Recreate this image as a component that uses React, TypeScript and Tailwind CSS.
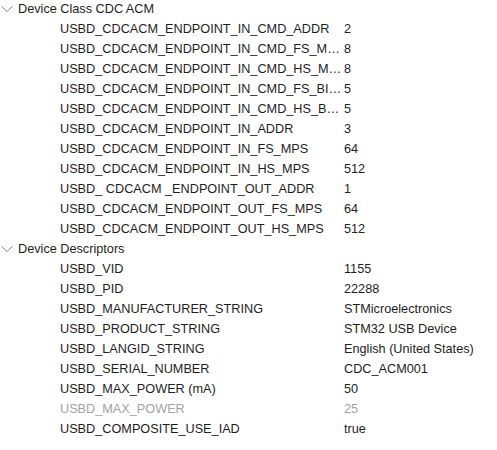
import React from 'react';

type Param = {
    name: string;
    value: string;
    disabled?: boolean;
};

type Group = {
    title: string;
    params: Param[];
};

const groups: Group[] = [
    {
        title: 'Device Class CDC ACM',
        params: [
            {name: 'USBD_CDCACM_ENDPOINT_IN_CMD_ADDR', value: '2'},
            {name: 'USBD_CDCACM_ENDPOINT_IN_CMD_FS_MPS', value: '8'},
            {name: 'USBD_CDCACM_ENDPOINT_IN_CMD_HS_MPS', value: '8'},
            {name: 'USBD_CDCACM_ENDPOINT_IN_CMD_FS_BINTERVAL', value: '5'},
            {name: 'USBD_CDCACM_ENDPOINT_IN_CMD_HS_BINTERVAL', value: '5'},
            {name: 'USBD_CDCACM_ENDPOINT_IN_ADDR', value: '3'},
            {name: 'USBD_CDCACM_ENDPOINT_IN_FS_MPS', value: '64'},
            {name: 'USBD_CDCACM_ENDPOINT_IN_HS_MPS', value: '512'},
            {name: 'USBD_ CDCACM _ENDPOINT_OUT_ADDR', value: '1'},
            {name: 'USBD_CDCACM_ENDPOINT_OUT_FS_MPS', value: '64'},
            {name: 'USBD_CDCACM_ENDPOINT_OUT_HS_MPS', value: '512'},
        ],
    },
    {
        title: 'Device Descriptors',
        params: [
            {name: 'USBD_VID', value: '1155'},
            {name: 'USBD_PID', value: '22288'},
            {name: 'USBD_MANUFACTURER_STRING', value: 'STMicroelectronics'},
            {name: 'USBD_PRODUCT_STRING', value: 'STM32 USB Device'},
            {name: 'USBD_LANGID_STRING', value: 'English (United States)'},
            {name: 'USBD_SERIAL_NUMBER', value: 'CDC_ACM001'},
            {name: 'USBD_MAX_POWER (mA)', value: '50'},
            {name: 'USBD_MAX_POWER', value: '25', disabled: true},
            {name: 'USBD_COMPOSITE_USE_IAD', value: 'true'},
        ],
    },
];

const Chevron = () => (
    <svg width="14" height="8" viewBox="0 0 14 8" className="shrink-0">
        <path d="M1.5 1.5 L7 6.5 L12.5 1.5" fill="none" stroke="#8a8a8a" strokeWidth="1"/>
    </svg>
);

export default function App() {
    return (
        <div className="w-[497px] h-[450px] bg-white overflow-hidden text-[12.7px] text-[#1e1e1e] font-['Liberation_Sans',Arial,sans-serif]">
            {groups.map(group => (
                <div key={group.title}>
                    <div className="h-5 flex items-center">
                        <div className="w-[18px] flex items-center -mt-[2px]">
                            <Chevron/>
                        </div>
                        <span className="whitespace-pre">{group.title}</span>
                    </div>
                    {group.params.map(p => (
                        <div
                            key={p.name + p.value}
                            className={`h-5 flex items-center pl-[60px] ${p.disabled ? 'text-[#a3a3a3]' : ''}`}
                        >
                            <div className="w-[282px] truncate whitespace-pre">{p.name}</div>
                            <div className="ml-[2px] whitespace-pre">{p.value}</div>
                        </div>
                    ))}
                </div>
            ))}
        </div>
    );
}
